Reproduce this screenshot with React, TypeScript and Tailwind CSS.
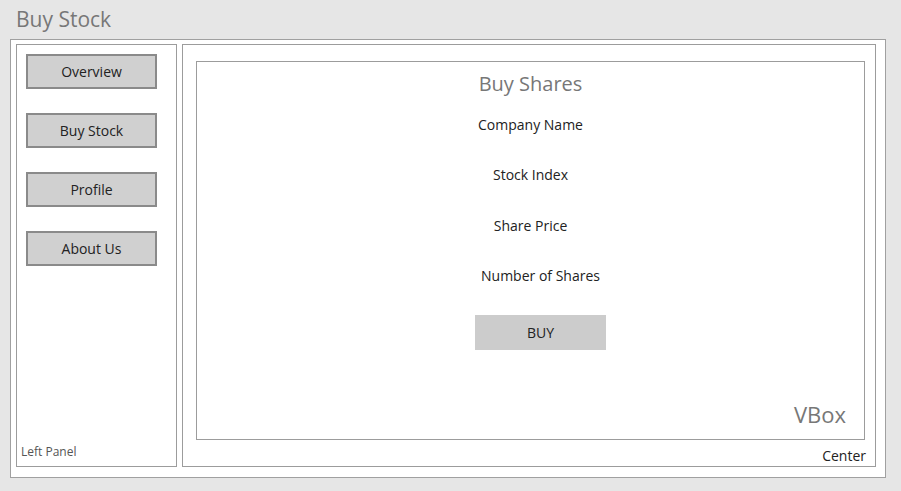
import React from "react";

const font = { fontFamily: '"Open Sans", "Noto Sans", sans-serif' };

function NavButton({ label }: { label: string }) {
  return (
    <div className="w-[131px] h-[35px] border-2 border-[#8a8a8a] bg-[#d0d0d0] flex items-center justify-center text-[14px] text-[#222]">
      {label}
    </div>
  );
}

export default function App() {
  return (
    <div className="w-[901px] h-[491px] bg-[#e6e6e6] flex flex-col font-['Open_Sans',sans-serif]" style={font}>
      <div className="h-[39px] pl-[16px] pt-[5px] text-[21px] leading-[28px] text-[#777]">Buy Stock</div>
      <div className="ml-[10px] w-[876px] h-[439px] border border-[#a0a0a0] bg-white flex gap-[5px] pl-[5px] pt-[4px]">
        {/* Left panel */}
        <div className="w-[161px] h-[423px] border border-[#9c9c9c] flex flex-col pl-[9px] pt-[9px]">
          <div className="flex flex-col gap-[24px]">
            <NavButton label="Overview" />
            <NavButton label="Buy Stock" />
            <NavButton label="Profile" />
            <NavButton label="About Us" />
          </div>
          <div className="mt-auto -ml-[5px] pb-[6px] text-[12px] leading-[16px] text-[#555]">Left Panel</div>
        </div>
        {/* Center panel */}
        <div className="w-[694px] h-[423px] border border-[#9c9c9c] flex flex-col pl-[13px] pt-[16px]">
          <div className="w-[669px] h-[380px] border border-[#9c9c9c] flex flex-col items-center">
            <div className="mt-[8px] text-[20px] leading-[28px] text-[#777]">Buy Shares</div>
            <div className="mt-[17px] text-[14px] leading-[20px] text-[#222]">Company Name</div>
            <div className="mt-[30px] text-[14px] leading-[20px] text-[#222]">Stock Index</div>
            <div className="mt-[31px] text-[14px] leading-[20px] text-[#222]">Share Price</div>
            <div className="mt-[30px] ml-[20px] text-[14px] leading-[20px] text-[#222]">Number of Shares</div>
            <div className="mt-[29px] ml-[20px] w-[131px] h-[35px] bg-[#cccccc] flex items-center justify-center text-[14px] text-[#222]">BUY</div>
            <div className="mt-auto self-end mr-[18px] mb-[10px] text-[22px] leading-[30px] text-[#777]">VBox</div>
          </div>
          <div className="self-end mr-[9px] mt-[6px] text-[14px] leading-[20px] text-[#222]">Center</div>
        </div>
      </div>
    </div>
  );
}
